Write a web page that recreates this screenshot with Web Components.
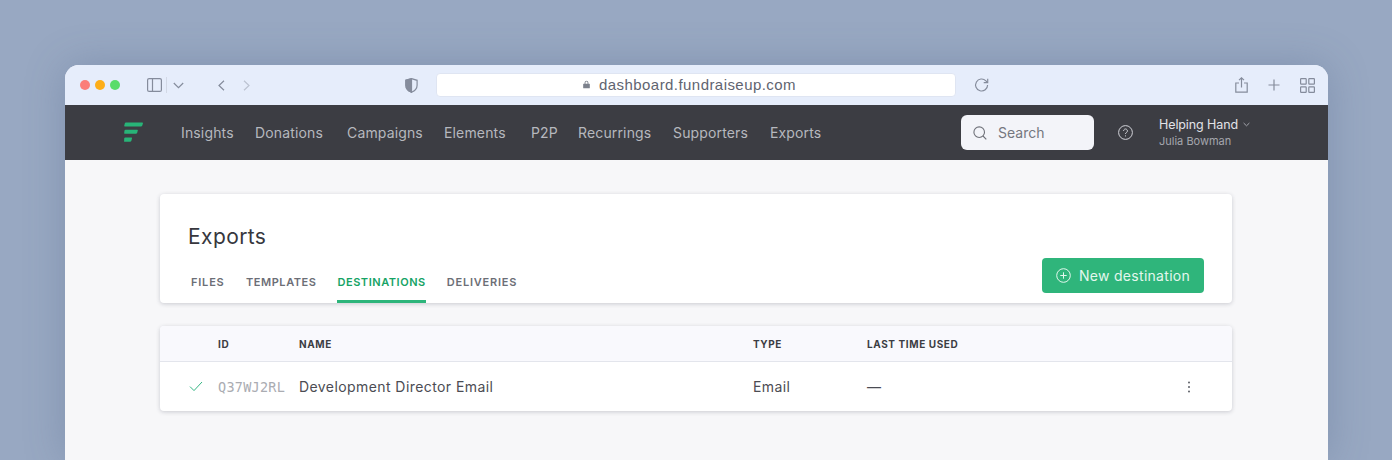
<!DOCTYPE html>
<html lang="en">
<head>
<meta charset="utf-8">
<title>Exports</title>
<style>
  html, body { height: 100%; }
  body {
    margin: 0;
    padding: 65px 64px 0 65px;
    box-sizing: border-box;
    overflow: hidden;
    background: #98a8c2;
    font-family: Inter, "Open Sans", sans-serif;
  }
</style>
</head>
<body>
<browser-window>
  <browser-toolbar url="dashboard.fundraiseup.com"></browser-toolbar>
  <app-nav></app-nav>
  <app-content>
    <page-header title="Exports" button="New destination"></page-header>
    <destinations-table></destinations-table>
  </app-content>
</browser-window>

<script>
class BrowserWindow extends HTMLElement {
  constructor() {
    super();
    this.attachShadow({ mode: 'open' });
    this.shadowRoot.innerHTML = `
      <style>
        :host {
          display: flex;
          flex-direction: column;
          height: 100%;
          border-radius: 14px 14px 0 0;
          overflow: hidden;
          background: #f7f7f9;
          box-shadow: 0 0 40px rgba(70, 90, 125, .28);
        }
      </style>
      <slot></slot>
    `;
  }
}
customElements.define('browser-window', BrowserWindow);

class BrowserToolbar extends HTMLElement {
  constructor() {
    super();
    this.attachShadow({ mode: 'open' });
  }

  connectedCallback() {
    this.shadowRoot.innerHTML = `
      <style>
        :host {
          display: flex;
          align-items: center;
          flex: none;
          height: 40px;
          background: #e6edfb;
          padding: 0 13px 0 15px;
          box-sizing: border-box;
          font-family: "Liberation Sans", sans-serif;
        }
        svg { display: block; flex: none; fill: none; stroke: #858c9c; stroke-width: 1.2; }
        .lights { display: flex; gap: 5px; width: 67px; flex: none; }
        .lights i { width: 10px; height: 10px; border-radius: 50%; }
        .sidebar { margin-right: 4px; }
        .sep { width: 1px; height: 16px; background: #d3d9e6; margin-right: 6px; }
        .caret { margin-right: 34px; }
        .back { margin-right: 18px; }
        .forward { stroke: #bcc3d1; margin-right: 155px; }
        .shield { margin-right: 18px; }
        .url {
          width: 520px;
          height: 24px;
          flex: none;
          display: flex;
          align-items: center;
          justify-content: center;
          gap: 9px;
          box-sizing: border-box;
          padding-right: 13px;
          margin: -1px 18px 0 0;
          background: #fff;
          border: 1px solid #dfe5f2;
          border-radius: 4px;
          font-size: 15px;
          letter-spacing: .44px;
          color: #5f6470;
        }
        .url svg { fill: #7c818c; stroke: none; }
        .right { margin-left: auto; display: flex; align-items: center; gap: 20px; }
      </style>
      <div class="lights">
        <i style="background:#fb7d79"></i><i style="background:#fdae19"></i><i style="background:#58dc6a"></i>
      </div>
      <svg class="sidebar" width="15" height="14" viewBox="0 0 15 14"><rect x=".6" y=".6" width="13.8" height="12.8" rx="1.5"/><path d="M5.5 .6v12.8"/></svg>
      <div class="sep"></div>
      <svg class="caret" width="11" height="7" viewBox="0 0 11 7"><path d="M.8 1l4.7 4.600L10.200 1"/></svg>
      <svg class="back" width="7" height="11" viewBox="0 0 7 11"><path d="M6 .8L1 5.500l5 4.700"/></svg>
      <svg class="forward" width="7" height="11" viewBox="0 0 7 11"><path d="M1 .8l5 4.700-5 4.700"/></svg>
      <svg class="shield" width="13" height="15" viewBox="0 0 13 15"><path d="M6.500 .7l5.600 1.600v5c0 3.300-2.300 5.600-5.600 7-3.300-1.400-5.600-3.700-5.600-7v-5z"/><path d="M6.500 .7v13.600c-3.300-1.400-5.600-3.700-5.600-7v-5z" fill="#858c9c"/></svg>
      <div class="url">
        <svg width="7" height="9" viewBox="0 0 8 10"><path d="M1.800 4V2.900a2.200 2.200 0 0 1 4.400 0V4H7.200a.6.6 0 0 1 .6.600v4a.6.6 0 0 1-.6.600H.8a.6.6 0 0 1-.6-.600v-4A.6.6 0 0 1 .8 4zm1 0h2.400V2.900a1.200 1.200 0 0 0-2.400 0z"/></svg>
        <span>${this.getAttribute('url')}</span>
      </div>
      <svg width="16" height="16" viewBox="0 0 16 16"><path d="M13.600 8a6 6 0 1 1-1.700-4.200L13.600 5.600"/><path d="M13.700 1.700v4h-4"/></svg>
      <div class="right">
        <svg width="13" height="16" viewBox="0 0 13 16"><path d="M4 6H.8v9.200h11.400V6H9"/><path d="M6.500 10.500V.8M4 3.100L6.500 .8 9 3.100"/></svg>
        <svg width="12" height="12" viewBox="0 0 12 12"><path d="M6 .5v11M.5 6h11"/></svg>
        <svg width="15" height="15" viewBox="0 0 15 15"><rect x=".6" y=".6" width="5.600" height="5.600" rx=".6"/><rect x="8.800" y=".6" width="5.600" height="5.600" rx=".6"/><rect x=".6" y="8.800" width="5.600" height="5.600" rx=".6"/><rect x="8.800" y="8.800" width="5.600" height="5.600" rx=".6"/></svg>
      </div>
    `;
  }
}
customElements.define('browser-toolbar', BrowserToolbar);

class AppNav extends HTMLElement {
  constructor() {
    super();
    this.attachShadow({ mode: 'open' });
    this.items = ['Insights', 'Donations', 'Campaigns', 'Elements', 'P2P', 'Recurrings', 'Supporters', 'Exports'];
  }

  connectedCallback() {
    this.shadowRoot.innerHTML = `
      <style>
        :host {
          display: flex;
          align-items: center;
          flex: none;
          height: 55px;
          background: #3c3d43;
          padding-left: 59px;
          box-sizing: border-box;
          font-size: 14px;
          letter-spacing: .15px;
        }
        .logo { display: block; flex: none; margin-right: 38px; }
        nav { display: grid; grid-template-columns: 74px 92px 97px 87px 47px 95px 97px auto; color: #b6b8be; }
        .search {
          margin-left: auto;
          width: 133px;
          height: 35px;
          flex: none;
          display: flex;
          align-items: center;
          gap: 11px;
          box-sizing: border-box;
          padding-left: 12px;
          background: #f3f4f9;
          border-radius: 6px;
          color: #75777f;
          letter-spacing: 0;
        }
        .help { display: block; margin: 0 26px 0 24px; flex: none; }
        .account { width: 169px; flex: none; margin-top: -2px; }
        .org { display: flex; align-items: center; gap: 5px; font-size: 12.500px; line-height: 18px; letter-spacing: -.1px; color: #e2e3e8; }
        .user { font-size: 11px; line-height: 14px; color: #a4a6ad; letter-spacing: 0; }
      </style>
      <svg class="logo" width="19" height="21" viewBox="0 0 19 21" fill="#28b478">
        <path d="M2 .6h16.300a.6.600 0 0 1 .6.800l-.6 2a1.500 1.500 0 0 1-1.400 1H.9a.6.600 0 0 1-.6-.8l.4-1.800A1.500 1.500 0 0 1 2 .6z"/>
        <path d="M1.700 7.800h11.500a.6.600 0 0 1 .6.800l-.6 2.100a1.500 1.500 0 0 1-1.400 1H.8a.6.600 0 0 1-.6-.8l.2-1.900a1.300 1.300 0 0 1 1.300-1.200z"/>
        <path d="M1.400 15.400h6a.6.600 0 0 1 .6.800l-.6 2.500a1.500 1.500 0 0 1-1.400 1H.7a.6.600 0 0 1-.6-.7l.1-2.400a1.200 1.200 0 0 1 1.200-1.200z"/>
      </svg>
      <nav>${this.items.map(item => `<span>${item}</span>`).join('')}</nav>
      <div class="search">
        <svg width="14" height="14" viewBox="0 0 14 14" fill="none" stroke="#6f7179" stroke-width="1.100"><circle cx="6.200" cy="6.200" r="5.300"/><path d="M10 10l3.300 3.300"/></svg>
        <span>Search</span>
      </div>
      <svg class="help" width="15" height="15" viewBox="0 0 15 15" fill="none" stroke="#d2d3d9" stroke-width="1"><circle cx="7.500" cy="7.500" r="6.900"/><path d="M5.600 5.900a1.900 1.900 0 1 1 2.900 1.600c-.7.400-1 .8-1 1.500"/><path d="M7.500 10.400v1"/></svg>
      <div class="account">
        <div class="org">Helping Hand <svg width="7" height="5" viewBox="0 0 7 5" fill="none" stroke="#a4a6ad"><path d="M.6 1l2.900 2.800L6.400 1"/></svg></div>
        <div class="user">Julia Bowman</div>
      </div>
    `;
  }
}
customElements.define('app-nav', AppNav);

class AppContent extends HTMLElement {
  constructor() {
    super();
    this.attachShadow({ mode: 'open' });
    this.shadowRoot.innerHTML = `
      <style>
        :host {
          display: flex;
          flex-direction: column;
          gap: 23px;
          flex: 1;
          padding: 34px 96px 0 95px;
          box-sizing: border-box;
        }
      </style>
      <slot></slot>
    `;
  }
}
customElements.define('app-content', AppContent);

class PageHeader extends HTMLElement {
  constructor() {
    super();
    this.attachShadow({ mode: 'open' });
    this.tabs = ['FILES', 'TEMPLATES', 'DESTINATIONS', 'DELIVERIES'];
  }

  connectedCallback() {
    this.shadowRoot.innerHTML = `
      <style>
        :host {
          display: block;
          height: 109px;
          box-sizing: border-box;
          padding: 31px 28px 0 28px;
          background: #fff;
          border-radius: 4px;
          box-shadow: 0 1px 4px rgba(40, 45, 70, .22);
        }
        h1 { margin: 0; height: 23px; font-size: 21px; line-height: 23px; font-weight: 400; color: #36373d; letter-spacing: .4px; }
        .bottom { display: flex; justify-content: space-between; align-items: flex-start; margin-top: 9px; }
        .tabs { display: flex; gap: 21px; padding-left: 3px; margin-top: 10px; }
        .tab { height: 36px; box-sizing: border-box; padding-top: 8px; font-size: 11px; line-height: 14px; font-weight: 600; letter-spacing: .55px; color: #6c6e76; }
        .tab:first-child { min-width: 34px; letter-spacing: .8px; }
        .tab:last-child { letter-spacing: .78px; }
        .tab.active { color: #16a365; border-bottom: 3px solid #2db57b; }
        button {
          display: flex;
          align-items: center;
          gap: 8px;
          width: 162px;
          height: 35px;
          padding: 0 0 0 14px;
          margin-top: 1px;
          box-sizing: border-box;
          border: 0;
          border-radius: 4px;
          background: #2fb57b;
          color: #e4f7ee;
          font: inherit;
          font-size: 14px;
          letter-spacing: .29px;
        }
      </style>
      <h1>${this.getAttribute('title')}</h1>
      <div class="bottom">
        <div class="tabs">
          ${this.tabs.map(tab => `<div class="tab${tab === 'DESTINATIONS' ? ' active' : ''}">${tab}</div>`).join('')}
        </div>
        <button>
          <svg width="15" height="15" viewBox="0 0 15 15" fill="none" stroke="#e4f7ee" stroke-width="1"><circle cx="7.500" cy="7.500" r="6.800"/><path d="M7.500 4.300v6.400M4.300 7.500h6.400"/></svg>
          <span>${this.getAttribute('button')}</span>
        </button>
      </div>
    `;
  }
}
customElements.define('page-header', PageHeader);

class DestinationsTable extends HTMLElement {
  constructor() {
    super();
    this.attachShadow({ mode: 'open' });
    this.columns = '58px 81px 454px 114px 1fr 45px';
  }

  connectedCallback() {
    this.shadowRoot.innerHTML = `
      <style>
        :host {
          display: block;
          height: 85px;
          background: #fff;
          border-radius: 4px;
          box-shadow: 0 1px 4px rgba(40, 45, 70, .22);
          overflow: hidden;
        }
        .row { display: grid; grid-template-columns: ${this.columns}; align-items: center; }
        .head {
          height: 36px;
          box-sizing: border-box;
          background: #f9f9fd;
          border-bottom: 1px solid #e3e5ec;
          font-size: 10px;
          font-weight: 700;
          letter-spacing: .6px;
          color: #3c3d43;
        }
        .body { height: 49px; font-size: 14px; letter-spacing: .42px; color: #4b4c53; }
        .check { display: block; margin-left: 29px; }
        .id { font-family: "DejaVu Sans Mono", "Liberation Mono", monospace; font-size: 13.500px; letter-spacing: .25px; color: #aaacb2; }
        .dots { display: block; }
      </style>
      <div class="row head">
        <span></span><span>ID</span><span>NAME</span><span>TYPE</span><span>LAST TIME USED</span><span></span>
      </div>
      <div class="row body">
        <svg class="check" width="14" height="11" viewBox="0 0 14 11" fill="none" stroke="#35b583" stroke-width="1"><path d="M1 5.600l4 4L13 1"/></svg>
        <span class="id">Q37WJ2RL</span>
        <span>Development Director Email</span>
        <span>Email</span>
        <span>—</span>
        <svg class="dots" width="4" height="12" viewBox="0 0 4 12" fill="#5e6068"><circle cx="2" cy="1.500" r="1"/><circle cx="2" cy="6" r="1"/><circle cx="2" cy="10.500" r="1"/></svg>
      </div>
    `;
  }
}
customElements.define('destinations-table', DestinationsTable);
</script>
</body>
</html>
